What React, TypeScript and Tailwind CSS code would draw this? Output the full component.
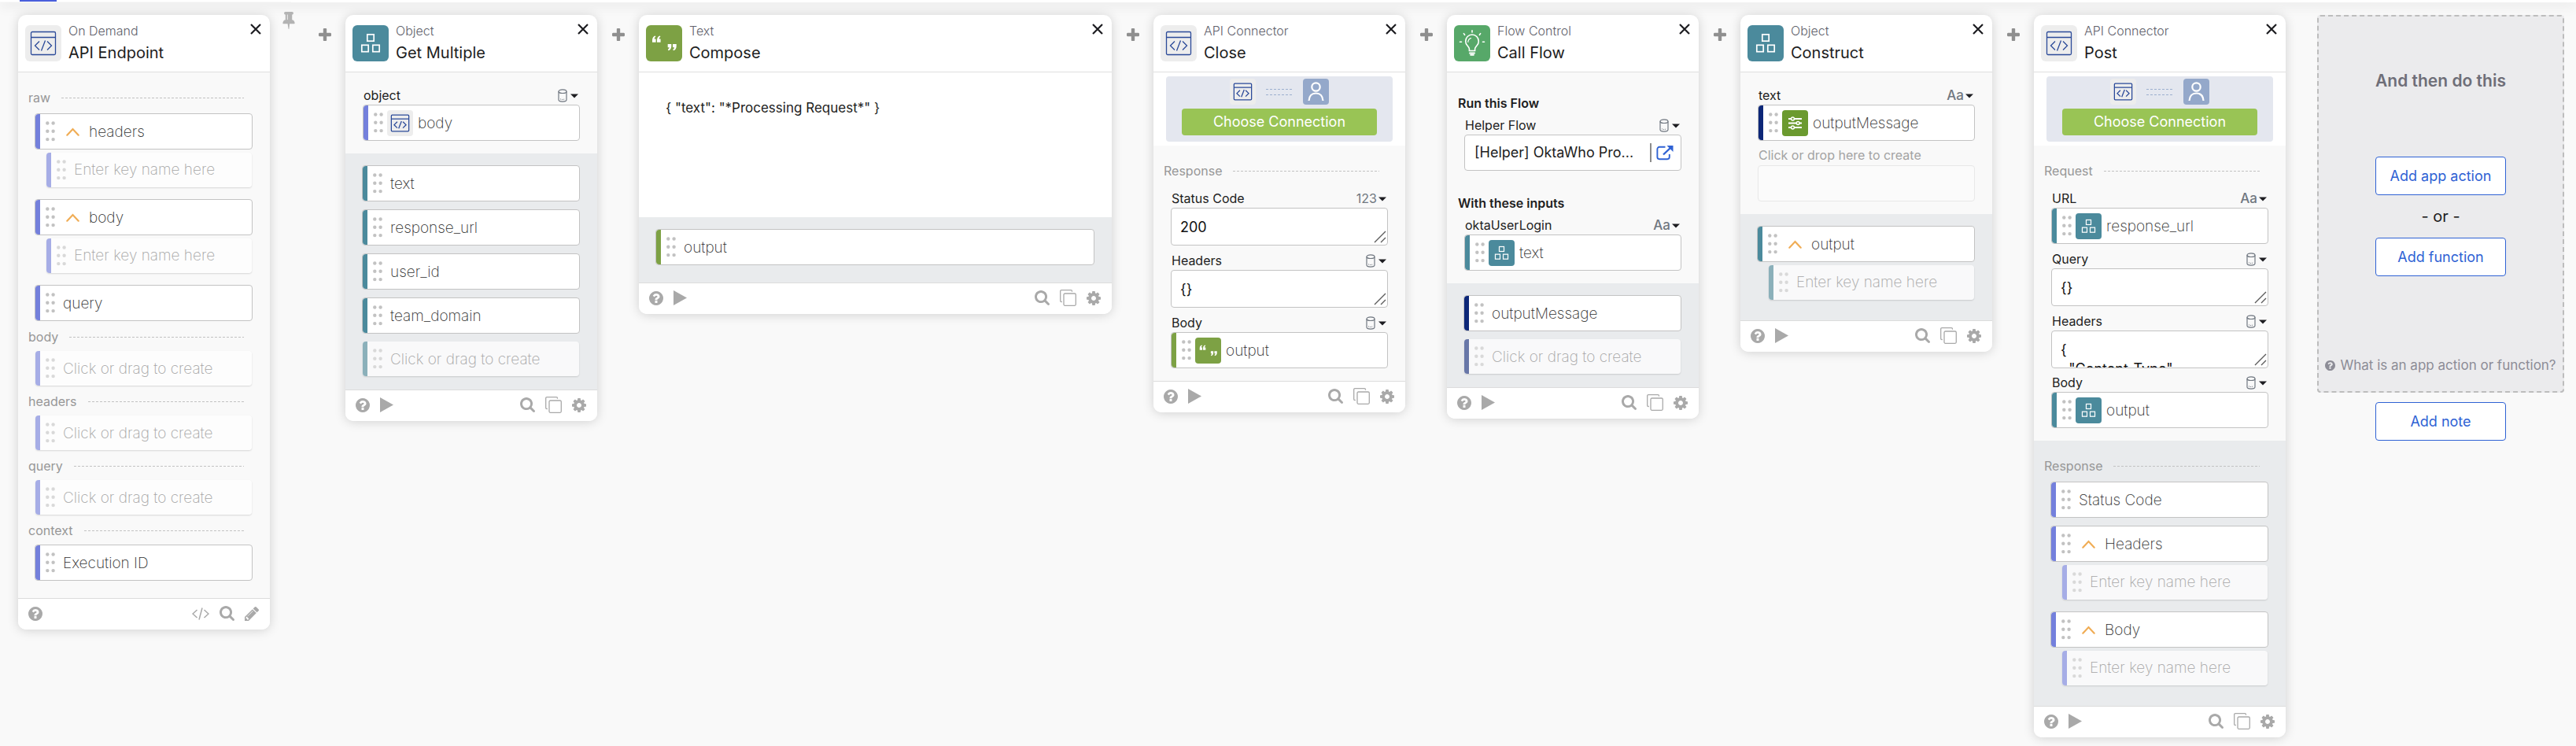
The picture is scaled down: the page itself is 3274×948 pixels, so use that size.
import React from "react";
import type { ReactNode } from "react";

type Tone = "indigo" | "teal" | "green" | "navy";

const stripes: Record<Tone, string> = {
  indigo: "bg-[#7480dc]",
  teal: "bg-[#4b8a9c]",
  green: "bg-[#7da144]",
  navy: "bg-[#0d2778]",
};

const fadedStripes: Record<Tone, string> = {
  indigo: "bg-[#a6ade6]",
  teal: "bg-[#8bb0ba]",
  green: "bg-[#aac388]",
  navy: "bg-[#6877a8]",
};

/* ---------- Icons ---------- */

function Glyph({ d, box, className }: { d: string; box: string; className: string }) {
  return (
    <svg viewBox={box} className={className} fill="currentColor" aria-hidden="true">
      <path d={d} />
    </svg>
  );
}

const paths = {
  search:
    "M1152 832q0-185-131.5-316.5t-316.5-131.5-316.5 131.5-131.5 316.5 131.5 316.5 316.5 131.5 316.5-131.5 131.5-316.5zm512 832q0 52-38 90t-90 38q-54 0-90-38l-343-342q-179 124-399 124-143 0-273.5-55.5t-225-150-150-225-55.5-273.5 55.5-273.5 150-225 225-150 273.5-55.5 273.5 55.5 225 150 150 225 55.5 273.5q0 220-124 399l343 343q37 37 37 90z",
  cog: "M1152 896q0-106-75-181t-181-75-181 75-75 181 75 181 181 75 181-75 75-181zm512-109v222q0 12-8 23t-20 13l-185 28q-19 54-39 91 35 50 107 138 10 12 10 25t-9 23q-27 37-99 108t-94 71q-12 0-26-9l-138-108q-44 23-91 38-16 136-29 186-7 28-36 28h-222q-14 0-24.5-8.5t-11.5-21.5l-28-184q-49-16-90-37l-141 107q-10 9-25 9-14 0-25-11-126-114-165-168-7-10-7-23 0-12 8-23 15-21 51-66.5t54-70.5q-27-50-41-99l-183-27q-13-2-21-12.5t-8-23.5v-222q0-12 8-23t19-13l186-28q14-46 39-92-40-57-107-138-10-12-10-24 0-10 9-23 26-36 98.5-107.5t94.5-71.5q13 0 26 10l138 107q44-23 91-38 16-136 29-186 7-28 36-28h222q14 0 24.5 8.5t11.5 21.5l28 184q49 16 90 37l142-107q9-9 24-9 13 0 25 10 129 119 165 170 7 8 7 22 0 12-8 23-15 21-51 66.5t-54 70.5q26 50 41 98l183 28q13 2 21 12.5t8 23.5z",
  pencil:
    "M491 1536l91-91-235-235-91 91v107h128v128h107zm523-928q0-22-22-22-10 0-17 7l-542 542q-7 7-7 17 0 22 22 22 10 0 17-7l542-542q7-7 7-17zm-54-192l416 416-832 832h-416v-416zm683 96q0 53-37 90l-166 166-416-416 166-165q36-38 90-38 53 0 91 38l235 234q37 39 37 91z",
  help: "M1024 1376v-192q0-14-9-23t-23-9h-192q-14 0-23 9t-9 23v192q0 14 9 23t23 9h192q14 0 23-9t9-23zm256-672q0-88-55.5-163t-138.5-116-170-41q-243 0-371 213-15 24 8 42l132 100q7 6 19 6 16 0 25-12 53-68 86-92 34-24 86-24 48 0 85.5 26t37.5 59q0 38-20 61t-68 45q-63 28-115.5 86.5t-52.5 125.5v36q0 14 9 23t23 9h192q14 0 23-9t9-23q0-19 21.5-49.5t54.5-49.5q32-18 49-28.5t46-35 44.5-48 28-60.5 12.5-81zm384 192q0 209-103 385.5t-279.5 279.5-385.5 103-385.5-103-279.5-279.5-103-385.5 103-385.5 279.5-279.5 385.5-103 385.5 103 279.5 279.5 103 385.5z",
  pin: "M800 864v-448q0-14-9-23t-23-9-23 9-9 23v448q0 14 9 23t23 9 23-9 9-23zm672 352q0 26-19 45t-45 19h-429l-51 483q-2 12-10.5 20.5t-20.5 8.5h-1q-27 0-32-27l-76-485h-404q-26 0-45-19t-19-45q0-123 78.5-221.5t177.5-98.5v-512q-52 0-90-38t-38-90 38-90 90-38h640q52 0 90 38t38 90-38 90-90 38v512q99 0 177.5 98.5t78.5 221.5z",
  plus: "M1600 736v192q0 40-28 68t-68 28h-416v416q0 40-28 68t-68 28h-192q-40 0-68-28t-28-68v-416h-416q-40 0-68-28t-28-68v-192q0-40 28-68t68-28h416v-416q0-40 28-68t68-28h192q40 0 68 28t28 68v416h416q40 0 68 28t28 68z",
};

function Dots({ faded }: { faded?: boolean }) {
  return (
    <svg
      viewBox="0 0 12 26"
      className={faded ? "h-[26px] w-3 shrink-0 text-[#d9d9d9]" : "h-[26px] w-3 shrink-0 text-[#c2c2c2]"}
      fill="currentColor"
      aria-hidden="true"
    >
      {[2.5, 12.8, 23.1].map((y) => (
        <g key={y}>
          <circle cx="2.3" cy={y} r="2.2" />
          <circle cx="9.6" cy={y} r="2.2" />
        </g>
      ))}
    </svg>
  );
}

function CodeWindow() {
  return (
    <svg viewBox="0 0 46 46" className="size-full" fill="none" stroke="#2b4a99" strokeWidth="1.3" aria-hidden="true">
      <rect x="7.5" y="8.5" width="31" height="29" rx="1.5" vectorEffect="non-scaling-stroke" />
      <path
        d="M7.5 15.5h31M18 20.5l-5.5 5.5 5.5 5.5M28 20.5l5.5 5.5-5.5 5.5M25.5 19.5l-5 13"
        vectorEffect="non-scaling-stroke"
      />
    </svg>
  );
}

function Cubes() {
  return (
    <svg viewBox="0 0 46 46" className="size-full" fill="none" stroke="#fff" strokeWidth="1.7" aria-hidden="true">
      <rect x="18.8" y="11.8" width="8.4" height="8.4" />
      <rect x="11.8" y="25.3" width="8.4" height="8.4" />
      <rect x="25.8" y="25.3" width="8.4" height="8.4" />
    </svg>
  );
}

function Quotes() {
  return (
    <svg viewBox="0 0 46 46" className="size-full" fill="#fff" aria-hidden="true">
      <path d="M12 13.4c-2.4.4-4 2.6-4 5.6v2.8h4.6v-4.4h-1.9c.1-1.2.6-1.9 1.6-2.3zM18 13.4c-2.4.4-4 2.6-4 5.6v2.8h4.6v-4.4h-1.9c.1-1.2.6-1.9 1.6-2.3z" />
      <path d="M28.3 32.3c2.4-.4 4-2.6 4-5.6v-2.8h-4.6v4.4h1.9c-.1 1.2-.6 1.9-1.6 2.3zM34.7 32.3c2.4-.4 4-2.6 4-5.6v-2.8h-4.6v4.4h1.9c-.1 1.2-.6 1.9-1.6 2.3z" />
    </svg>
  );
}

function Bulb() {
  return (
    <svg
      viewBox="0 0 46 46"
      className="size-full"
      fill="none"
      stroke="#fff"
      strokeWidth="1.6"
      strokeLinecap="round"
      aria-hidden="true"
    >
      <path d="M19.4 32.5v-2.4c0-1.4-1.1-2.4-2.2-3.8a8.3 8.3 0 1 1 11.6 0c-1.1 1.4-2.2 2.4-2.2 3.8v2.4z" />
      <path d="M20 35.5h6M21.2 37.8h3.6" strokeWidth="2" />
      <path d="M17.8 21.5a5.5 5.5 0 0 1 3.7-5" strokeWidth="1.2" />
      <path d="M23 6.8v2.2M12.4 10.6l1.2 1.7M33.6 10.6l-1.2 1.7M7.500 21.300h2M36.500 21.300h2" />
    </svg>
  );
}

function Sliders() {
  return (
    <svg viewBox="0 0 33 33" className="size-full" fill="none" stroke="#fff" strokeWidth="2" aria-hidden="true">
      <path d="M8 11h4M15.5 11h9.5M8 16.5h10.500M22 16.500h3M8 22h4M15.500 22h9.500" />
      <circle cx="13.5" cy="11" r="1.9" strokeWidth="1.5" />
      <circle cx="20.2" cy="16.5" r="1.9" strokeWidth="1.5" />
      <circle cx="13.5" cy="22" r="1.9" strokeWidth="1.5" />
    </svg>
  );
}

type IconName = "code" | "cubes" | "quotes" | "bulb" | "sliders";

const tiles: Record<IconName, { bg: string; art: ReactNode }> = {
  code: { bg: "bg-[#ededed]", art: <CodeWindow /> },
  cubes: { bg: "bg-[#4b8a9c]", art: <Cubes /> },
  quotes: { bg: "bg-[#7da144]", art: <Quotes /> },
  bulb: { bg: "bg-[#57a869]", art: <Bulb /> },
  sliders: { bg: "bg-[#6b9a2f]", art: <Sliders /> },
};

function Tile({ icon, small }: { icon: IconName; small?: boolean }) {
  const { bg, art } = tiles[icon];
  return (
    <span className={`${small ? "size-[33px] rounded" : "size-[46px] rounded-md"} ${bg} block shrink-0`}>{art}</span>
  );
}

/* ---------- Pills ---------- */

interface PillProps {
  tone: Tone;
  text: string;
  icon?: IconName;
  expandable?: boolean;
  id?: string;
  className?: string;
}

function Pill({ tone, text, icon, expandable, id, className = "" }: PillProps) {
  const inner = (
    <>
      <span className={`h-full w-1.5 shrink-0 rounded-l-sm ${stripes[tone]}`} />
      <span className="ml-[7px] flex">
        <Dots />
      </span>
      {icon && (
        <span className="mr-1.5 ml-[5px]">
          <Tile icon={icon} small />
        </span>
      )}
      {expandable && (
        <svg
          viewBox="0 0 17 11"
          className="mr-3 ml-3.5 h-[11px] w-[17px] shrink-0"
          fill="none"
          stroke="#f0ad56"
          strokeWidth="2.2"
          strokeLinecap="round"
          aria-hidden="true"
        >
          <path d="M1.300 9.700 8.500 2l7.200 7.700" />
        </svg>
      )}
      <span
        className={`truncate pt-0.5 text-[19px] leading-6 font-extralight text-[#2e2e2e] ${icon || expandable ? "" : "ml-2.5"}`}
      >
        {text}
      </span>
    </>
  );
  const base = `flex h-[46px] items-center rounded border border-[#c3c3c3] bg-white text-left ${className}`;
  if (icon) {
    return (
      <button type="button" id={id} className={`${base} mx-[22px]`}>
        {inner}
      </button>
    );
  }
  if (expandable) {
    return (
      <button type="button" aria-expanded="true" className={`${base} mr-[22px] ml-[21px]`}>
        {inner}
      </button>
    );
  }
  return <div className={`${base} mr-[22px] ml-[21px]`}>{inner}</div>;
}

function GhostPill({ tone, className = "" }: { tone: Tone; className?: string }) {
  return (
    <button
      type="button"
      className={`mr-[23px] ml-[22px] flex h-11 items-center rounded bg-white/70 text-left shadow-[0_1px_2px_rgba(0,0,0,0.14)] ${className}`}
    >
      <span className={`h-full w-1.5 shrink-0 rounded-l ${fadedStripes[tone]}`} />
      <span className="ml-[7px] flex">
        <Dots faded />
      </span>
      <span className="ml-2.5 pt-0.5 text-[19px] leading-6 font-extralight text-[#a6a6a6]">Click or drag to create</span>
    </button>
  );
}

function KeyPill({ tone, name }: { tone: Tone; name: string }) {
  return (
    <label className="mt-1 mr-[23px] ml-9 flex h-11 items-center rounded bg-white/70 shadow-[0_1px_2px_rgba(0,0,0,0.14)]">
      <span className={`h-full w-1.5 shrink-0 rounded-l ${fadedStripes[tone]}`} />
      <span className="ml-[7px] flex">
        <Dots faded />
      </span>
      <input
        type="text"
        aria-label={`New key in ${name}`}
        placeholder="Enter key name here"
        className="ml-2.5 min-w-0 flex-1 bg-transparent text-[19px] leading-6 font-extralight outline-none placeholder:text-[#a6a6a6]"
      />
    </label>
  );
}

/* ---------- Fields ---------- */

function Divider({ text, className = "" }: { text: string; className?: string }) {
  return (
    <div className={`mr-[33px] ml-[13px] flex h-5 items-center gap-3.5 ${className}`}>
      <h3 className="text-base leading-5 text-[#979797]">{text}</h3>
      <span className="h-px flex-1 bg-[repeating-linear-gradient(90deg,#c2c2c2_0_3px,transparent_3px_5px)]" />
    </div>
  );
}

type Kind = "object" | "text" | "number";

function KindButton({ kind, field }: { kind: Kind; field: string }) {
  return (
    <button
      type="button"
      aria-haspopup="menu"
      aria-label={`${field} type`}
      className={`flex h-5 items-center text-[#707780] ${kind === "object" ? "gap-1" : "gap-0.5"}`}
    >
      {kind === "object" && (
        <svg viewBox="0 0 12 17" className="h-[17px] w-3" fill="none" stroke="currentColor" strokeWidth="1.2" aria-hidden="true">
          <ellipse cx="6" cy="3.2" rx="5" ry="2.3" />
          <path d="M1 3.200v10.600c0 1.300 2.200 2.300 5 2.300s5-1 5-2.300V3.200" />
          <path d="M3 12.800c2 .9 4 .9 6 0" strokeDasharray="1 1" strokeWidth="1" />
        </svg>
      )}
      {kind === "text" && <span className="text-[17px] leading-5 font-medium">Aa</span>}
      {kind === "number" && <span className="text-base leading-5">123</span>}
      <svg viewBox="0 0 10 7" className="h-[7px] w-2.5 text-[#1d1d21]" fill="currentColor" aria-hidden="true">
        <path d="M0 1.500h10L5 6.500z" />
      </svg>
    </button>
  );
}

function FieldLabel({ id, text, kind, className = "" }: { id: string; text: string; kind: Kind; className?: string }) {
  return (
    <div className={`mr-6 mb-0.5 ml-[23px] flex h-5 items-center justify-between ${className}`}>
      <label htmlFor={id} className="pb-px text-base leading-5 text-[#1d1d21]">
        {text}
      </label>
      <KindButton kind={kind} field={text} />
    </div>
  );
}

function TextBox({ id, value }: { id: string; value: string }) {
  return (
    <div className="relative mx-[22px]">
      <textarea
        id={id}
        defaultValue={value}
        spellCheck={false}
        className="block h-12 w-full resize-none overflow-hidden rounded border border-[#c3c3c3] bg-white px-[11px] pt-3 text-lg leading-6 text-[#111] outline-none"
      />
      <svg
        viewBox="0 0 16 16"
        className="absolute right-0.5 bottom-[3px] size-4"
        fill="none"
        stroke="#5c5c5c"
        strokeWidth="1.4"
        aria-hidden="true"
      >
        <path d="M1 15 15 1M9 15l6-6" />
      </svg>
    </div>
  );
}

/* ---------- Cards ---------- */

interface CardProps {
  icon: IconName;
  app: string;
  title: string;
  wide?: boolean;
  endpoint?: boolean;
  children: ReactNode;
}

function Card({ icon, app, title, wide, endpoint, children }: CardProps) {
  return (
    <article
      className={`${wide ? "min-w-96 flex-1" : "w-80 shrink-0"} flex flex-col overflow-hidden rounded-[10px] bg-white shadow-[0_1px_14px_rgba(0,0,0,0.17)]`}
    >
      <header className="flex h-[73px] items-start border-b border-[#dfdfdf] pt-[9px] pr-[11px] pl-[9px]">
        <div className="mt-1">
          <Tile icon={icon} />
        </div>
        <div className="ml-[9px] min-w-0 flex-1">
          <p className="text-base leading-[22px] font-light text-[#62626c]">{app}</p>
          <h2 className="mt-[3px] truncate text-xl leading-7 text-[#1d1d21]">{title}</h2>
        </div>
        <button type="button" aria-label={`Remove ${title}`} className="mt-0.5 flex size-3.5 text-[#1d1d21]">
          <svg viewBox="0 0 14 14" className="size-3.5" fill="none" stroke="currentColor" strokeWidth="2.2" aria-hidden="true">
            <path d="M1 1l12 12M13 1 1 13" />
          </svg>
        </button>
      </header>
      {children}
      <footer className="flex h-10 items-center justify-between border-t border-[#dcdcdc] bg-white pr-3.5 pb-0.5 pl-[13px] text-[#a9a9a9]">
        <div className="flex items-center gap-[13px]">
          <button type="button" aria-label="Help">
            <Glyph d={paths.help} box="128 128 1536 1536" className="size-[18px]" />
          </button>
          {!endpoint && (
            <button type="button" aria-label="Run card">
              <Glyph d="M0 0l17 9.500L0 19z" box="0 0 17 19" className="h-[19px] w-[17px]" />
            </button>
          )}
        </div>
        <div className="flex items-center gap-[13px]">
          {endpoint && (
            <button type="button" aria-label="View code">
              <svg viewBox="0 0 22 16" className="h-4 w-[22px]" fill="none" stroke="currentColor" strokeWidth="1.5" aria-hidden="true">
                <path d="M6.500 3 1 8l5.500 5M15.500 3 21 8l-5.500 5M13 .5 9 15.500" />
              </svg>
            </button>
          )}
          <button type="button" aria-label="Search">
            <Glyph d={paths.search} box="0 128 1664 1664" className="size-[19px]" />
          </button>
          {!endpoint && (
            <button type="button" aria-label="Duplicate">
              <svg viewBox="0 0 21 21" className="size-[21px]" fill="none" stroke="currentColor" strokeWidth="1.3" aria-hidden="true">
                <rect x="5" y="5" width="15.3" height="15.3" rx="1.5" />
                <path d="M2.800 15.500H2A1.300 1.300 0 0 1 .7 14.200V2A1.300 1.300 0 0 1 2 .7h12.200A1.300 1.300 0 0 1 15.500 2v.8" />
              </svg>
            </button>
          )}
          {endpoint ? (
            <button type="button" aria-label="Edit">
              <Glyph d={paths.pencil} box="128 150 1514 1514" className="size-[18px]" />
            </button>
          ) : (
            <button type="button" aria-label="Settings">
              <Glyph d={paths.cog} box="128 128 1536 1536" className="size-[18px]" />
            </button>
          )}
        </div>
      </footer>
    </article>
  );
}

function Inputs({ children, className = "" }: { children: ReactNode; className?: string }) {
  return <section className={`flex flex-col bg-[#f9f9f9] pb-4 ${className}`}>{children}</section>;
}

function Outputs({ children, className = "" }: { children: ReactNode; className?: string }) {
  return <section className={`flex flex-col bg-[#e9ebed] ${className}`}>{children}</section>;
}

function Connection() {
  return (
    <section className="bg-white px-4 py-[5px]">
      <div className="flex h-[83px] flex-col items-center gap-[5px] rounded bg-[#e4e7ef] pt-[3px]">
        <div className="flex items-center gap-[13px]">
          <Tile icon="code" small />
          <span className="flex w-[34px] flex-col gap-1.5">
            <span className="h-px bg-[repeating-linear-gradient(90deg,#9db0cf_0_3px,transparent_3px_5px)]" />
            <span className="h-px bg-[repeating-linear-gradient(90deg,#9db0cf_0_3px,transparent_3px_5px)]" />
          </span>
          <span className="block size-[33px] rounded bg-[#94a8ca]">
            <svg viewBox="0 0 33 33" className="size-full" fill="none" stroke="#fff" strokeWidth="2.2" aria-hidden="true">
              <circle cx="16.5" cy="10.5" r="5.2" />
              <path d="M7.500 28c.5-6.500 4-9.500 9-9.500s8.500 3 9 9.500" />
            </svg>
          </span>
        </div>
        <button type="button" className="h-[34px] w-[248px] rounded-sm bg-[#99c455] text-lg leading-[34px] text-white">
          Choose Connection
        </button>
      </div>
    </section>
  );
}

function Insert() {
  return (
    <div className="flex w-[53px] shrink-0 justify-center pt-[17px]">
      <button type="button" aria-label="Insert card" className="size-4 text-[#8f8f8f]">
        <Glyph d={paths.plus} box="192 128 1408 1408" className="size-4" />
      </button>
    </div>
  );
}

function OutlineButton({ children, className = "" }: { children: ReactNode; className?: string }) {
  return (
    <button
      type="button"
      className={`h-[49px] w-[166px] rounded-sm border border-[#2f62d4] bg-white text-lg leading-6 text-[#2f62d4] ${className}`}
    >
      {children}
    </button>
  );
}

export default function App() {
  return (
    <div className="min-h-screen bg-[#f9f9f9] font-['Inter',sans-serif] text-[#1d1d21]">
      <div className="flex h-[3px] items-start shadow-[0_2px_16px_rgba(0,0,0,0.22)]">
        <div className="flex h-0.5 w-[370px] bg-white pl-[25px]">
          <span className="w-[47px] bg-[#4a5fdc]" />
        </div>
        <div className="h-[3px] flex-1 bg-white" />
      </div>

      <main className="flex items-start pt-4 pr-[15px] pb-[11px] pl-[23px]">
        <Card icon="code" app="On Demand" title="API Endpoint" endpoint>
          <section className="flex flex-col bg-[#f9f9f9] py-[22px]">
            <Divider text="raw" className="mb-2.5" />
            <Pill tone="indigo" text="headers" expandable />
            <KeyPill tone="indigo" name="headers" />
            <Pill tone="indigo" text="body" expandable className="mt-[15px]" />
            <KeyPill tone="indigo" name="body" />
            <Pill tone="indigo" text="query" className="mt-[15px]" />
            <Divider text="body" className="mt-2.5 mb-2" />
            <GhostPill tone="indigo" />
            <Divider text="headers" className="mt-2.5 mb-2" />
            <GhostPill tone="indigo" />
            <Divider text="query" className="mt-2.5 mb-2" />
            <GhostPill tone="indigo" />
            <Divider text="context" className="mt-2.5 mb-2" />
            <Pill tone="indigo" text="Execution ID" />
          </section>
        </Card>

        <div className="flex w-[43px] shrink-0 justify-end pr-[11px]">
          <button type="button" aria-label="Pin card" className="-mt-1 text-[#b3b3b3]">
            <Glyph d={paths.pin} box="320 128 1152 1664" className="h-[22px] w-4" />
          </button>
        </div>
        <Insert />

        <Card icon="cubes" app="Object" title="Get Multiple">
          <Inputs className="pt-[19px]">
            <FieldLabel id="gm-object" text="object" kind="object" />
            <Pill id="gm-object" tone="indigo" text="body" icon="code" />
          </Inputs>
          <Outputs className="gap-2.5 pt-[15px] pb-[17px]">
            <Pill tone="teal" text="text" />
            <Pill tone="teal" text="response_url" />
            <Pill tone="teal" text="user_id" />
            <Pill tone="teal" text="team_domain" />
            <GhostPill tone="teal" />
          </Outputs>
        </Card>

        <Insert />

        <Card icon="quotes" app="Text" title="Compose" wide>
          <section className="bg-white">
            <textarea
              aria-label="Text to compose"
              spellCheck={false}
              defaultValue={'{ "text": "*Processing Request*" }'}
              className="block h-[184px] w-full resize-none px-[34px] pt-[33px] text-[17px] leading-6 outline-none"
            />
          </section>
          <Outputs className="pt-[15px] pb-[22px]">
            <Pill tone="green" text="output" />
          </Outputs>
        </Card>

        <Insert />

        <Card icon="code" app="API Connector" title="Close">
          <Connection />
          <Inputs className="pt-[22px]">
            <Divider text="Response" className="mb-[15px]" />
            <FieldLabel id="close-status" text="Status Code" kind="number" />
            <TextBox id="close-status" value="200" />
            <FieldLabel id="close-headers" text="Headers" kind="object" className="mt-[9px]" />
            <TextBox id="close-headers" value="{}" />
            <FieldLabel id="close-body" text="Body" kind="object" className="mt-[9px]" />
            <Pill id="close-body" tone="green" text="output" icon="quotes" />
          </Inputs>
        </Card>

        <Insert />

        <Card icon="bulb" app="Flow Control" title="Call Flow">
          <Inputs className="pt-[29px]">
            <h3 className="mb-2 ml-3.5 text-base leading-5 font-semibold">Run this Flow</h3>
            <FieldLabel id="flow-helper" text="Helper Flow" kind="object" />
            <div className="mx-[22px] flex h-[46px] items-center rounded border border-[#c3c3c3] bg-white pr-[9px] pl-3">
              <button type="button" id="flow-helper" className="min-w-0 flex-1 truncate text-left text-lg leading-6">
                [Helper] OktaWho Pro...
              </button>
              <span className="mr-1.5 h-6 w-0.5 bg-[#8c8c8c]" />
              <a href="#helper-flow" aria-label="Open helper flow" className="text-[#2f62d4]">
                <svg viewBox="0 0 22 20" className="h-5 w-[22px]" fill="none" stroke="currentColor" strokeWidth="1.9" aria-hidden="true">
                  <path d="M11.500 2.800H4A2.600 2.600 0 0 0 1.400 5.400v10.200A2.600 2.600 0 0 0 4 18.200h10.200a2.600 2.600 0 0 0 2.600-2.600V12" />
                  <path d="M9 12.500 18 4" strokeWidth="2.4" />
                  <path d="M13.500 1h8v8z" fill="currentColor" stroke="none" />
                </svg>
              </a>
            </div>
            <h3 className="mt-[31px] mb-2 ml-3.5 text-base leading-5 font-semibold">With these inputs</h3>
            <FieldLabel id="flow-login" text="oktaUserLogin" kind="text" />
            <Pill id="flow-login" tone="teal" text="text" icon="cubes" />
          </Inputs>
          <Outputs className="gap-2.5 pt-[15px] pb-[17px]">
            <Pill tone="navy" text="outputMessage" />
            <GhostPill tone="navy" />
          </Outputs>
        </Card>

        <Insert />

        <Card icon="cubes" app="Object" title="Construct">
          <Inputs className="pt-[19px]">
            <FieldLabel id="con-text" text="text" kind="text" />
            <Pill id="con-text" tone="navy" text="outputMessage" icon="sliders" />
            <label htmlFor="con-new" className="mt-2 mb-[3px] ml-[23px] text-base leading-5 text-[#a3a3a3]">
              Click or drop here to create
            </label>
            <input
              id="con-new"
              type="text"
              className="mx-[22px] h-[46px] rounded border border-[#e8e8e8] bg-[#fbfbfb] px-3 text-lg outline-none"
            />
          </Inputs>
          <Outputs className="pt-[15px] pb-[26px]">
            <Pill tone="teal" text="output" expandable />
            <KeyPill tone="teal" name="output" />
          </Outputs>
        </Card>

        <Insert />

        <Card icon="code" app="API Connector" title="Post">
          <Connection />
          <Inputs className="pt-[22px]">
            <Divider text="Request" className="mb-[15px]" />
            <FieldLabel id="post-url" text="URL" kind="text" />
            <Pill id="post-url" tone="teal" text="response_url" icon="cubes" />
            <FieldLabel id="post-query" text="Query" kind="object" className="mt-[9px]" />
            <TextBox id="post-query" value="{}" />
            <FieldLabel id="post-headers" text="Headers" kind="object" className="mt-[9px]" />
            <TextBox id="post-headers" value={'{\n  "Content-Type"'} />
            <FieldLabel id="post-body" text="Body" kind="object" className="mt-2" />
            <Pill id="post-body" tone="teal" text="output" icon="cubes" />
          </Inputs>
          <Outputs className="pt-[22px] pb-[26px]">
            <Divider text="Response" className="mb-2.5" />
            <Pill tone="indigo" text="Status Code" />
            <Pill tone="indigo" text="Headers" expandable className="mt-2.5" />
            <KeyPill tone="indigo" name="Headers" />
            <Pill tone="indigo" text="Body" expandable className="mt-[15px]" />
            <KeyPill tone="indigo" name="Body" />
          </Outputs>
        </Card>

        <aside className="ml-10 flex w-[314px] shrink-0 flex-col items-center">
          <div className="flex h-[480px] w-full flex-col items-center rounded border-2 border-dashed border-[#bdbdbd] bg-[#ebebed] pb-[21px]">
            <h2 className="mt-[68px] text-[21px] leading-7 font-semibold text-[#6e6e78]">And then do this</h2>
            <OutlineButton className="mt-[82px]">Add app action</OutlineButton>
            <p className="my-[13px] text-xl leading-7">- or -</p>
            <OutlineButton>Add function</OutlineButton>
            <a href="#help" className="mt-auto flex items-center gap-1.5 text-[17px] leading-6 whitespace-nowrap text-[#8c8c96]">
              <Glyph d={paths.help} box="128 128 1536 1536" className="size-[13px]" />
              What is an app action or function?
            </a>
          </div>
          <OutlineButton className="mt-3">Add note</OutlineButton>
        </aside>
      </main>
    </div>
  );
}
